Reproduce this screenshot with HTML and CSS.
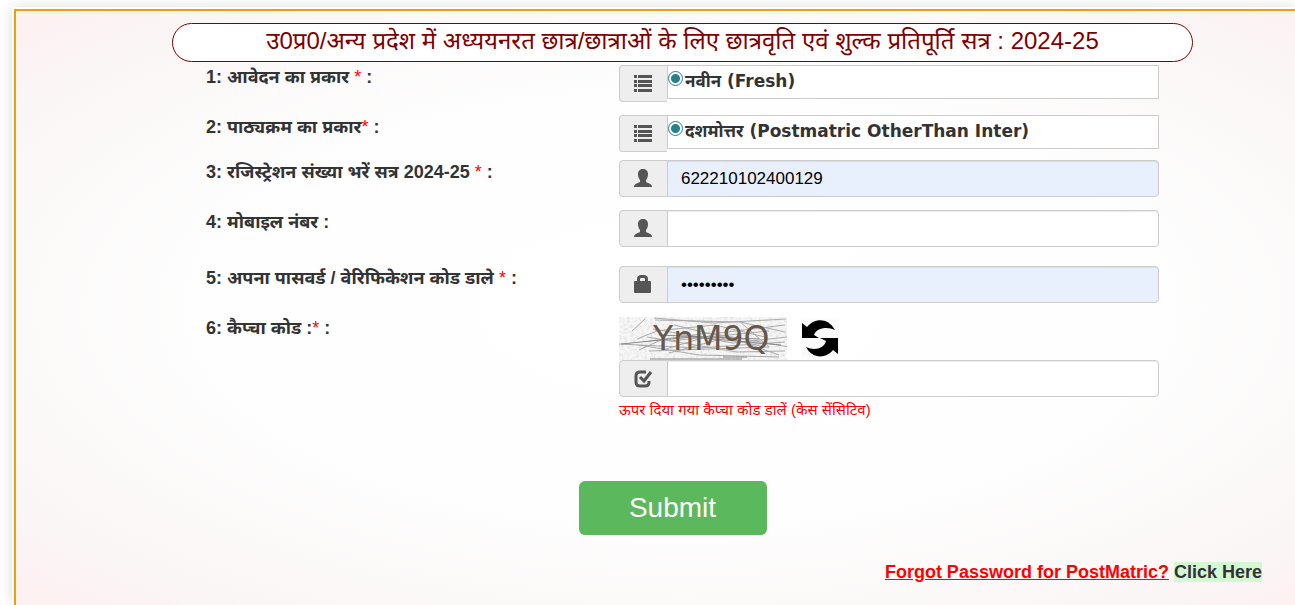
FILE: index.html
```html
<!DOCTYPE html>
<html lang="hi">
<head>
    <meta charset="UTF-8">
    <meta name="viewport" content="width=device-width, initial-scale=1.0">
    <title>Scholarship Login</title>
    <link rel="stylesheet" href="styles.css">
</head>
<body>
    <div class="wrapper">
        <div class="panel">
            <form class="login" action="#">
                <h1 class="title">उ0प्र0/अन्य प्रदेश में अध्ययनरत छात्र/छात्राओं के लिए छात्रवृति एवं शुल्क प्रतिपूर्ति सत्र : 2024-25</h1>

                <div class="rows">
                    <div class="row">
                        <label class="name" for="app_type">1: आवेदन का प्रकार <span class="req">*</span> :</label>
                        <div class="group radio">
                            <span class="addon"><svg width="20" height="18" viewBox="0 0 20 18"><path d="M1 0h3v3H1zM5 0h14v3H5zM1 5h3v3H1zM5 5h14v3H5zM1 9h3v3H1zM5 9h14v3H5zM1 14h3v3H1zM5 14h14v3H5z"/></svg></span>
                            <div class="box"><input type="radio" id="app_type" name="app_type" checked><label for="app_type">नवीन (Fresh)</label></div>
                        </div>
                    </div>

                    <div class="row tight">
                        <label class="name" for="course">2: पाठ्यक्रम का प्रकार<span class="req">*</span> :</label>
                        <div class="group radio">
                            <span class="addon"><svg width="20" height="18" viewBox="0 0 20 18"><path d="M1 0h3v3H1zM5 0h14v3H5zM1 5h3v3H1zM5 5h14v3H5zM1 9h3v3H1zM5 9h14v3H5zM1 14h3v3H1zM5 14h14v3H5z"/></svg></span>
                            <div class="box"><input type="radio" id="course" name="course" checked><label for="course">दशमोत्तर (Postmatric OtherThan Inter)</label></div>
                        </div>
                    </div>

                    <div class="row">
                        <label class="name" for="reg_no">3: रजिस्ट्रेशन संख्या भरें सत्र 2024-25 <span class="req">*</span> :</label>
                        <div class="group">
                            <span class="addon"><svg width="20" height="20" viewBox="0 0 20 20"><path d="M10 0c3 0 5 2 5 5 0 3-1 5-2 6v2c2 1 6 2 6 5H1c0-3 4-4 6-5v-2C6 10 5 8 5 5c0-3 2-5 5-5z"/></svg></span>
                            <input type="text" class="filled" id="reg_no" value="622210102400129">
                        </div>
                    </div>

                    <div class="row loose">
                        <label class="name" for="mobile">4: मोबाइल नंबर :</label>
                        <div class="group">
                            <span class="addon"><svg width="20" height="20" viewBox="0 0 20 20"><path d="M10 0c3 0 5 2 5 5 0 3-1 5-2 6v2c2 1 6 2 6 5H1c0-3 4-4 6-5v-2C6 10 5 8 5 5c0-3 2-5 5-5z"/></svg></span>
                            <input type="text" id="mobile">
                        </div>
                    </div>

                    <div class="row">
                        <label class="name" for="password">5: अपना पासवर्ड / वेरिफिकेशन कोड डाले <span class="req">*</span> :</label>
                        <div class="group">
                            <span class="addon"><svg width="20" height="20" viewBox="0 0 20 20"><path fill-rule="evenodd" d="M4 6V4c0-3 2-4 4-4h3c2 0 4 1 4 4v2h2q1 0 1 1v10q0 1-1 1H2q-1 0-1-1V7q0-1 1-1zM7 6h5V4c0-1-1-1-1-1H8S7 3 7 4z"/></svg></span>
                            <input type="password" class="filled" id="password" value="123456789">
                        </div>
                    </div>

                    <div class="row">
                        <label class="name" for="captcha">6: कैप्चा कोड :<span class="req">*</span> :</label>
                        <div>
                            <div class="captcha">
                                <svg class="code" width="168" height="43" viewBox="0 0 168 43">
                                    <filter id="grain" x="0" y="0" width="100%" height="100%">
                                        <feTurbulence type="fractalNoise" baseFrequency=".35" numOctaves="2" seed="4"/>
                                        <feColorMatrix values="0 0 0 0 .75  0 0 0 0 .75  0 0 0 0 .75  2.4 0 0 0 -1"/>
                                    </filter>
                                    <rect width="168" height="43" fill="#f7f7f7"/>
                                    <rect width="168" height="43" filter="url(#grain)"/>
                                    <g fill="none" stroke="#aaa" stroke-width="1">
                                        <path d="M35 1l60 5 72-4M36 3l85 2 45 10M36 14l60-6 50 12M30 24l60-8 80 14M0 27l80 4 86-6M28 20l90 15 48-1M40 34l60-18 66-8M50 36l60-16 50 18M13 14L26 2M18 22l20-8M20 33l22-10M30 34l120-4M50 24l100-10M55 8l90 22M120 4l30 26M20 28l60 10 80 2M34 12l80 14 54-6"/>
                                        <path stroke="#888" d="M31 42h92M104 40h24M2 27l70-7 90 8M40 18l100 4"/>
                                    </g>
                                    <text x="34" y="33" font-family="DejaVu Sans" font-size="33" fill="#66584b">YnM9Q</text>
                                </svg>
                                <button type="button" class="refresh" aria-label="Refresh">
                                    <svg width="38" height="38" viewBox="0 0 38 38"><rect width="38" height="38" fill="#fafafa"/><path d="M1 4l5 4C13-1 27-2 34 11 26 7 15 9 13 16l5 3H1zM37 35l-5-4C25 40 11 40 5 28c8 4 18 2 20-6l-6-3h18z"/></svg>
                                </button>
                            </div>
                            <div class="group">
                                <span class="addon"><svg width="20" height="20" viewBox="0 0 20 20"><path fill="none" stroke="#555" stroke-width="3" d="M13 3H7Q3 3 3 7v6q0 4 4 4h5q4 0 4-4v-1"/><path fill="none" stroke="#555" stroke-width="3" d="M7 8l4 4 7-9"/></svg></span>
                                <input type="text" id="captcha">
                            </div>
                            <p class="hint">ऊपर दिया गया कैप्चा कोड डालें (केस सेंसिटिव)</p>
                        </div>
                    </div>
                </div>

                <div class="actions">
                    <button type="submit" class="submit">Submit</button>
                </div>
            </form>

            <p class="forgot"><a class="red" href="#">Forgot Password for PostMatric?</a> <a class="here" href="#">Click Here</a></p>
        </div>
    </div>
</body>
</html>
```
FILE: styles.css
```css
* {box-sizing: border-box;}
body {margin: 0;background: #fff;color: #333;font-family: "Liberation Sans", "Noto Sans", sans-serif;}
h1, p {margin: 0;}

.wrapper {display: flow-root;margin-left: 12px;padding-top: 7px;}
.wrapper {padding: 2px 0 0 2px;margin-top: 7px;background: #fff;box-shadow: 0 0 12px #ddd;}
.panel {min-height: calc(100vh - 9px);border: solid #f39c12;border-width: 2px 0 0 2px;background: radial-gradient(ellipse at 52% 50%, #fff 0, #fefefe 50%, #faf6f5 85%, #fdf1f2 95%);}
.login {padding: 12px 102px 0 156px;}

.title {height: 39px;border: 1px solid #800000;border-radius: 20px;background: #fff;color: #800000;font-size: 24px;font-weight: normal;line-height: 34px;text-align: center;white-space: nowrap;}

.rows {padding: 3px 34px 0;}
.row {display: grid;grid-template-columns: 13fr 17fr;min-height: 50px;align-items: start;}
.row.tight {min-height: 45px;}
.row.loose {min-height: 56px;}
.name {font-size: 18px;font-weight: bold;line-height: 24px;white-space: nowrap;}
.req {color: #f00;font-weight: normal;}

.group {display: flex;height: 37px;}
.addon {display: flex;align-items: center;justify-content: center;flex: none;width: 49px;border: 1px solid #ccc;border-radius: 4px 0 0 4px;background: #eee;}
.addon svg {fill: #555;}
.group input[type="text"], .group input[type="password"] {flex: 1;min-width: 0;margin-left: -1px;padding: 0 13px;border: 1px solid #ccc;border-radius: 0 4px 4px 0;background: #fff;box-shadow: inset 0 1px 1px rgba(0,0,0,.08);color: #000;font-family: inherit;font-size: 17px;}
.group input.filled {background: #e8f0fe;}

.radio .addon {width: 48px;border-right: 0;}
.box {display: flex;flex: 1;height: 34px;border: 1px solid #ccc;background: #fff;}
.box label {font-family: "DejaVu Sans", "Noto Sans", sans-serif;font-size: 17px;font-weight: bold;line-height: 30px;white-space: nowrap;}
.box input {appearance: none;width: 15px;height: 15px;margin: 5px 2px 0 0;border: 1px solid #26808f;border-radius: 50%;background: radial-gradient(circle, #26808f 4px, #fff 5px);}

.captcha {display: flex;align-items: center;height: 44px;}
.refresh {margin-left: 14px;padding: 0;border: 0;background: none;}
.refresh svg {display: block;}
.hint {color: #f00;font-size: 15px;line-height: 26px;}

.actions {padding: 58px 20px 0 0;text-align: center;}
.submit {width: 188px;height: 54px;border: 0;border-radius: 6px;background: #5cb85c;color: #fff;font-family: inherit;font-size: 28px;}

.forgot {padding: 26px 33px 0 0;font-size: 18px;font-weight: bold;line-height: 22px;text-align: right;}
.red {color: #f00;}
.here {background: #d4f7d4;color: #333;text-decoration: none;}
```
